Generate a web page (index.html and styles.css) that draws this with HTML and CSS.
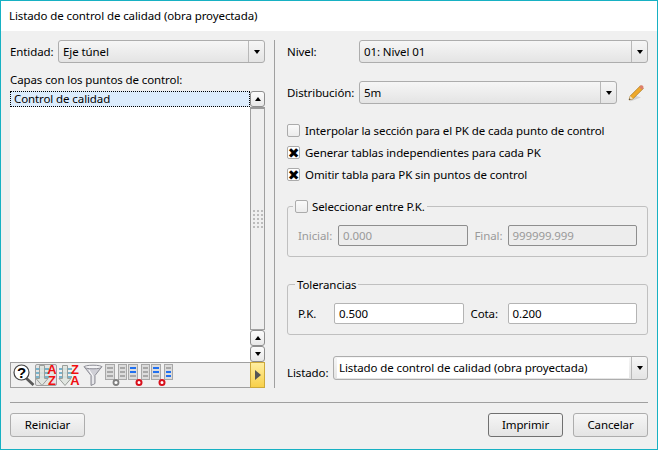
FILE: index.html
```html
<!DOCTYPE html>
<html lang="es">
<head>
<meta charset="utf-8">
<title>Listado de control de calidad</title>
<link rel="stylesheet" href="styles.css">
</head>
<body>
<div class="window">
  <div class="titlebar">Listado de control de calidad (obra proyectada)</div>
  <div class="content">
    <div class="main">
      <div class="left">
        <div class="row entity-row">
          <span class="entity-label">Entidad:</span>
          <div class="combo grow"><span class="combo-text">Eje túnel</span><span class="combo-arrow"><i class="tri-down"></i></span></div>
        </div>
        <div class="layers-label">Capas con los puntos de control:</div>
        <div class="listpanel">
          <div class="list-area">
            <div class="list"><div class="list-item">Control de calidad</div></div>
            <div class="scrollbar">
              <div class="sb-btn"><i class="tri-up"></i></div>
              <div class="sb-thumb"><svg class="grip" width="10" height="18" viewBox="0 0 10 18"><g fill="#bcbcbc"><rect x="0" y="0" width="2" height="2"/><rect x="4" y="0" width="2" height="2"/><rect x="8" y="0" width="2" height="2"/><rect x="0" y="4" width="2" height="2"/><rect x="4" y="4" width="2" height="2"/><rect x="8" y="4" width="2" height="2"/><rect x="0" y="8" width="2" height="2"/><rect x="4" y="8" width="2" height="2"/><rect x="8" y="8" width="2" height="2"/><rect x="0" y="12" width="2" height="2"/><rect x="4" y="12" width="2" height="2"/><rect x="8" y="12" width="2" height="2"/><rect x="0" y="16" width="2" height="2"/><rect x="4" y="16" width="2" height="2"/><rect x="8" y="16" width="2" height="2"/></g></svg></div>
              <div class="sb-btn"><i class="tri-up"></i></div>
              <div class="sb-btn"><i class="tri-down"></i></div>
            </div>
          </div>
          <div class="toolbar">
            <div class="tools">
              <svg class="tool t-help" width="22" height="22" viewBox="0 0 22 22"><line x1="13" y1="14" x2="20.500" y2="21" stroke="#5a5a5a" stroke-width="2.800"/><circle cx="8.500" cy="8.500" r="7.500" fill="#fff" stroke="#444" stroke-width="1.200"/><text x="8.500" y="14" class="qm">?</text></svg>
              <svg class="tool t-az pressed" width="22" height="22" viewBox="0 0 22 22"><g fill="#79b4cc"><rect x="1" y="4" width="13" height="2"/><rect x="1" y="8" width="13" height="2"/><rect x="1" y="12" width="13" height="2"/></g><path d="M4.500 1.500h5v13h3.500l-6 7-6-7h3.500z" fill="#dfe4df" fill-opacity=".9" stroke="#9a9e9a"/><text x="17" y="10" class="az">A</text><text x="17" y="21" class="az">Z</text></svg>
              <svg class="tool t-za" width="22" height="22" viewBox="0 0 22 22"><g fill="#79b4cc"><rect x="1" y="4" width="13" height="2"/><rect x="1" y="8" width="13" height="2"/><rect x="1" y="12" width="13" height="2"/></g><path d="M4.500 1.500h5v13h3.500l-6 7-6-7h3.500z" fill="#dfe4df" fill-opacity=".9" stroke="#9a9e9a"/><text x="17" y="10" class="az">Z</text><text x="17" y="21" class="az">A</text></svg>
              <svg class="tool t-funnel" width="20" height="22" viewBox="0 0 20 22"><path d="M1 2.500h18l-7 9v8l-4 2v-10z" fill="#cfcfd6" stroke="#8e8e96"/><ellipse cx="10" cy="3" rx="9" ry="1.800" fill="#f4f4f6" stroke="#8e8e96"/><path d="M6 6l4 6v8" fill="none" stroke="#fff"/></svg>
              <svg class="tool t-cols" width="22" height="22" viewBox="0 0 22 22"><rect x="0.500" y="0.500" width="9" height="15" fill="#dcdcdc" stroke="#a8a8a8"/><rect x="13.500" y="0.500" width="8" height="15" fill="#dcdcdc" stroke="#a8a8a8"/><g fill="#a8a8a8"><rect x="2" y="3" width="6" height="2"/><rect x="2" y="7" width="6" height="2"/><rect x="2" y="11" width="6" height="2"/><rect x="15" y="3" width="5" height="2"/><rect x="15" y="7" width="5" height="2"/><rect x="15" y="11" width="5" height="2"/></g><circle cx="11" cy="18.500" r="2.500" fill="#fff" stroke="#808080" stroke-width="1.800"/></svg>
              <svg class="tool t-cols" width="22" height="22" viewBox="0 0 22 22"><rect x="0.500" y="0.500" width="9" height="15" fill="#dcdcdc" stroke="#a8a8a8"/><rect x="13.500" y="0.500" width="8" height="15" fill="#dcdcdc" stroke="#a8a8a8"/><g fill="#2070f0"><rect x="2" y="3" width="6" height="2"/><rect x="2" y="7" width="6" height="2"/></g><g fill="#a8a8a8"><rect x="2" y="11" width="6" height="2"/><rect x="15" y="3" width="5" height="2"/><rect x="15" y="7" width="5" height="2"/><rect x="15" y="11" width="5" height="2"/></g><circle cx="11" cy="18.500" r="2.500" fill="#fff" stroke="#d8101c" stroke-width="2"/></svg>
              <svg class="tool t-cols" width="22" height="22" viewBox="0 0 22 22"><rect x="0.500" y="0.500" width="9" height="15" fill="#dcdcdc" stroke="#a8a8a8"/><rect x="13.500" y="0.500" width="8" height="15" fill="#dcdcdc" stroke="#a8a8a8"/><g fill="#2070f0"><rect x="2" y="3" width="6" height="2"/><rect x="2" y="7" width="6" height="2"/><rect x="15" y="7" width="5" height="2"/><rect x="15" y="11" width="5" height="2"/></g><g fill="#a8a8a8"><rect x="2" y="11" width="6" height="2"/><rect x="15" y="3" width="5" height="2"/></g><circle cx="11" cy="18.500" r="2.500" fill="#fff" stroke="#d8101c" stroke-width="2"/></svg>
            </div>
            <div class="more"><i class="tri-right"></i></div>
          </div>
        </div>
      </div>
      <div class="vline"></div>
      <div class="right">
        <div class="row level-row">
          <span class="field-label">Nivel:</span>
          <div class="combo grow"><span class="combo-text">01: Nivel 01</span><span class="combo-arrow"><i class="tri-down"></i></span></div>
        </div>
        <div class="row dist-row">
          <span class="field-label">Distribución:</span>
          <div class="combo grow"><span class="combo-text">5m</span><span class="combo-arrow"><i class="tri-down"></i></span></div>
          <svg class="pencil" width="18" height="18" viewBox="0 0 18 18"><path d="M3 17.500l11-4-9-3z" fill="#000" fill-opacity=".12"/><path d="M2 16l1.200-4L13.500 1.700l2.800 2.800L6 14.800z" fill="#efa92a" stroke="#a8741a" stroke-width=".7"/><path d="M12.300 2.900l1.200-1.200c.8-.7 2-.5 2.500.2.600.7.700 1.700 0 2.600l-1.200 1.200z" fill="#dd7f6c"/><path d="M2 16l1.200-4 2.800 2.800z" fill="#f3e0bc"/><path d="M2 16l.5-1.700 1.200 1.200z" fill="#333"/></svg>
        </div>
        <div class="checks">
          <label class="check"><span class="box"></span>Interpolar la sección para el PK de cada punto de control</label>
          <label class="check"><span class="box on">✖</span>Generar tablas independientes para cada PK</label>
          <label class="check"><span class="box on">✖</span>Omitir tabla para PK sin puntos de control</label>
        </div>
        <div class="group group-pk">
          <div class="legend legend-check"><span class="box"></span>Seleccionar entre P.K.</div>
          <div class="group-row disabled">
            <span class="lbl-a">Inicial:</span><div class="input dis">0.000</div>
            <span class="lbl-b">Final:</span><div class="input dis">999999.999</div>
          </div>
        </div>
        <div class="group group-tol">
          <div class="legend">Tolerancias</div>
          <div class="group-row">
            <span class="lbl-a narrow">P.K.</span><div class="input">0.500</div>
            <span class="lbl-b wide">Cota:</span><div class="input">0.200</div>
          </div>
        </div>
        <div class="row list-row">
          <span class="list-label">Listado:</span>
          <div class="combo grow editable"><span class="combo-edit">Listado de control de calidad (obra proyectada)</span><span class="combo-arrow"><i class="tri-down"></i></span></div>
        </div>
      </div>
    </div>
    <div class="hr"></div>
    <div class="buttons">
      <div class="btn">Reiniciar</div>
      <div class="spacer"></div>
      <div class="btn primary">Imprimir</div>
      <div class="btn">Cancelar</div>
    </div>
  </div>
</div>
</body>
</html>
```
FILE: styles.css
```css
* { box-sizing: border-box; }
html, body { margin: 0; padding: 0; }
body { width: 658px; height: 450px; overflow: hidden; font-family: "Noto Sans", sans-serif; font-size: 11.5px; letter-spacing: -0.1px; color: #000; }
.window { width: 658px; height: 450px; border: 1px solid #17b1c3; display: flex; flex-direction: column; background: #f0f0f0; }
.titlebar { height: 30px; background: #fff; padding-left: 8px; line-height: 30px; flex: none; }
.content { flex: 1; display: flex; flex-direction: column; padding: 9px 9px 0; min-height: 0; }
.main { display: flex; height: 348px; flex: none; }
.left { width: 255px; display: flex; flex-direction: column; flex: none; }
.vline { width: 1px; background: #a0a0a0; margin: 0 12px 0 9px; flex: none; }
.right { flex: 1; display: flex; flex-direction: column; min-width: 0; }
.row { display: flex; align-items: center; }
.grow { flex: 1; min-width: 0; }
.entity-label { width: 48px; flex: none; }
.combo { height: 23px; border: 1px solid #adadad; border-radius: 3px; background: linear-gradient(#f6f6f6, #e4e4e4); display: flex; align-items: stretch; }
.combo-text { flex: 1; padding-left: 4px; line-height: 21px; }
.combo-arrow { width: 16px; flex: none; border-left: 1px solid #b8b8b8; display: flex; align-items: center; justify-content: center; }
.tri-down, .tri-up, .tri-right { display: block; width: 0; height: 0; border-style: solid; border-color: transparent; }
.tri-down { border-width: 4px 3.5px 0; border-top-color: #000; }
.tri-up { border-width: 0 3.5px 4px; border-bottom-color: #000; }
.tri-right { border-width: 5px 0 5px 6px; border-left-color: #555; }
.layers-label { margin-top: 8px; line-height: 17px; height: 20px; }
.listpanel { flex: 1; display: flex; flex-direction: column; min-height: 0; }
.list-area { flex: 1; display: flex; min-height: 0; }
.list { flex: 1; background: #fff; }
.list-item { height: 16px; line-height: 14px; padding-left: 3px; background: #dcecfc; border: 1px dotted #000; }
.scrollbar { width: 15px; flex: none; display: flex; flex-direction: column; }
.sb-btn { height: 16px; flex: none; border: 1px solid #8e8e8e; border-radius: 3px; background: linear-gradient(#fcfcfc, #e8e8e8); display: flex; align-items: center; justify-content: center; }
.sb-thumb { flex: 1; border: 1px solid #a0a0a0; border-top: 2px solid #9a9a9a; background: #efefef; display: flex; align-items: center; justify-content: center; }
.toolbar { height: 26px; flex: none; display: flex; }
.tools { flex: 1; border: 1px solid #a0a0a0; border-right: 0; background: #f0f0f0; display: flex; align-items: center; padding-left: 2px; }
.tool { display: block; flex: none; margin-right: 1px; overflow: visible; }
.t-help { margin-right: 0; }
.pressed { background: #e4e4e4; outline: 1px solid #a0a0a0; outline-offset: -1px; border-radius: 2px; }
.t-funnel { margin: 0 2px 0 2px; }
.qm { font-family: "Liberation Sans", sans-serif; font-size: 15px; font-weight: 700; text-anchor: middle; fill: #000; letter-spacing: 0; }
.az { font-family: "Liberation Sans", sans-serif; font-size: 13px; font-weight: 700; text-anchor: middle; fill: #f01010; letter-spacing: 0; }
.more { width: 15px; flex: none; border: 1px solid #cda93a; background: linear-gradient(#ffeea0, #f8d04a); display: flex; align-items: center; justify-content: center; }
.field-label { width: 72px; flex: none; }
.dist-row { margin-top: 18px; }
.pencil { margin: 0 3px 0 10px; flex: none; }
.checks { margin-top: 18px; display: flex; flex-direction: column; gap: 5px; }
.check { display: flex; align-items: center; height: 17px; }
.box { width: 13px; height: 13px; flex: none; margin-right: 5px; border: 1px solid #ababab; border-radius: 2px; background: linear-gradient(#fafafa, #ececec); display: flex; align-items: center; justify-content: center; overflow: hidden; font-size: 14px; line-height: 1; letter-spacing: 0; color: #000; font-family: "DejaVu Sans", sans-serif; }
.box.on { background: #fff; }
.group { border: 1px solid #c0c0c0; border-radius: 3px; position: relative; height: 51px; }
.group-pk { margin-top: 23px; }
.group-tol { margin-top: 27px; }
.legend { position: absolute; left: 7px; top: -9px; background: #f0f0f0; padding: 0 2px; display: flex; align-items: center; height: 17px; }
.legend-check { left: 5px; }
.legend-check .box { margin-right: 4px; }
.group-row { display: flex; align-items: center; padding: 18px 10px 0; }
.lbl-a { width: 40px; flex: none; }
.lbl-a.narrow { width: 36px; }
.lbl-b { width: 40px; flex: none; padding-left: 7px; }
.lbl-b.wide { width: 44px; }
.input { flex: 1; height: 21px; background: #fff; border: 1px solid #b4b4b4; border-radius: 2px; padding-left: 4px; line-height: 19px; }
.input.dis { background: #ededed; border-color: #8e8e8e; color: #9a9a9a; }
.disabled { color: #9a9a9a; }
.list-row { margin-top: 20px; }
.list-label { width: 46px; flex: none; padding-top: 10px; }
.editable { height: 24px; }
.combo-edit { flex: 1; background: #fff; margin: 1px 2px 1px 3px; padding-left: 2px; line-height: 20px; }
.hr { height: 1px; background: #a0a0a0; margin-top: 14px; flex: none; }
.buttons { display: flex; margin-top: 10px; gap: 10px; }
.spacer { flex: 1; }
.btn { width: 75px; height: 24px; border: 1px solid #adadad; border-radius: 3px; background: linear-gradient(#f6f6f6, #e4e4e4); text-align: center; line-height: 22px; }
.btn.primary { border-color: #707070; }
```
